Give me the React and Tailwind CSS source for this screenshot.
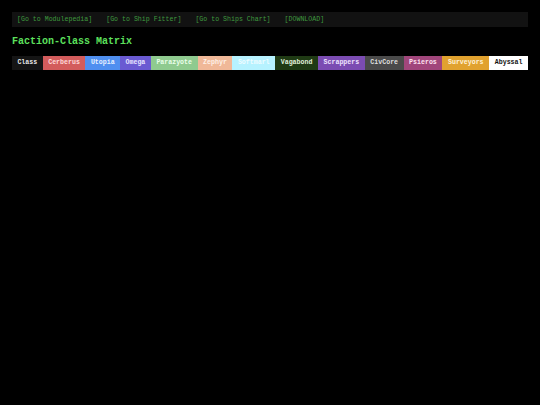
import React from "react";

const links = ["[Go to Modulepedia]", "[Go to Ship Fitter]", "[Go to Ships Chart]", "[DOWNLOAD]"];

const factions = [
  { name: "Class", cls: "bg-[#151515] text-[#e8e8e8]" },
  { name: "Cerberus", cls: "bg-[#d35c5c] text-[#ffd8d8]" },
  { name: "Utopia", cls: "bg-[#4f8ff0] text-[#e6f0ff]" },
  { name: "Omega", cls: "bg-[#6a5ad2] text-[#e8e4ff]" },
  { name: "Parazyote", cls: "bg-[#8fca8f] text-[#eaffea]" },
  { name: "Zephyr", cls: "bg-[#f0b898] text-[#fff0e6]" },
  { name: "Softmarl", cls: "bg-[#b6f2ff] text-[#eefcff]" },
  { name: "Vagabond", cls: "bg-[#1f3a14] text-[#e2f2dc]" },
  { name: "Scrappers", cls: "bg-[#7b4cb2] text-[#efe4ff]" },
  { name: "CivCore", cls: "bg-[#4a4a4a] text-[#dedede]" },
  { name: "Psieros", cls: "bg-[#a1467b] text-[#ffe2f0]" },
  { name: "Surveyors", cls: "bg-[#e1a22f] text-[#fff2d8]" },
  { name: "Abyssal", cls: "bg-white text-[#111]" },
];

export default function App() {
  return (
    <div className="min-h-[405px] w-full bg-black px-3 pt-3 font-['Liberation_Mono','Courier_New',monospace]">
      <nav className="flex h-[15px] items-center gap-[14px] bg-[#121212] pl-[5px] text-[6.6px] text-[#3f9a3f]">
        {links.map((l) => (
          <span key={l}>{l}</span>
        ))}
      </nav>
      <h1 className="mt-[8px] text-[10px] font-bold leading-[13px] text-[#5de05d]">Faction-Class Matrix</h1>
      <table className="mt-[8px] w-[516px] border-collapse">
        <thead>
          <tr>
            {factions.map((f) => (
              <th
                key={f.name}
                className={`h-[14px] whitespace-nowrap px-[5px] py-0 text-center text-[6.6px] font-bold leading-[14px] ${f.cls}`}
              >
                {f.name}
              </th>
            ))}
          </tr>
        </thead>
      </table>
    </div>
  );
}
